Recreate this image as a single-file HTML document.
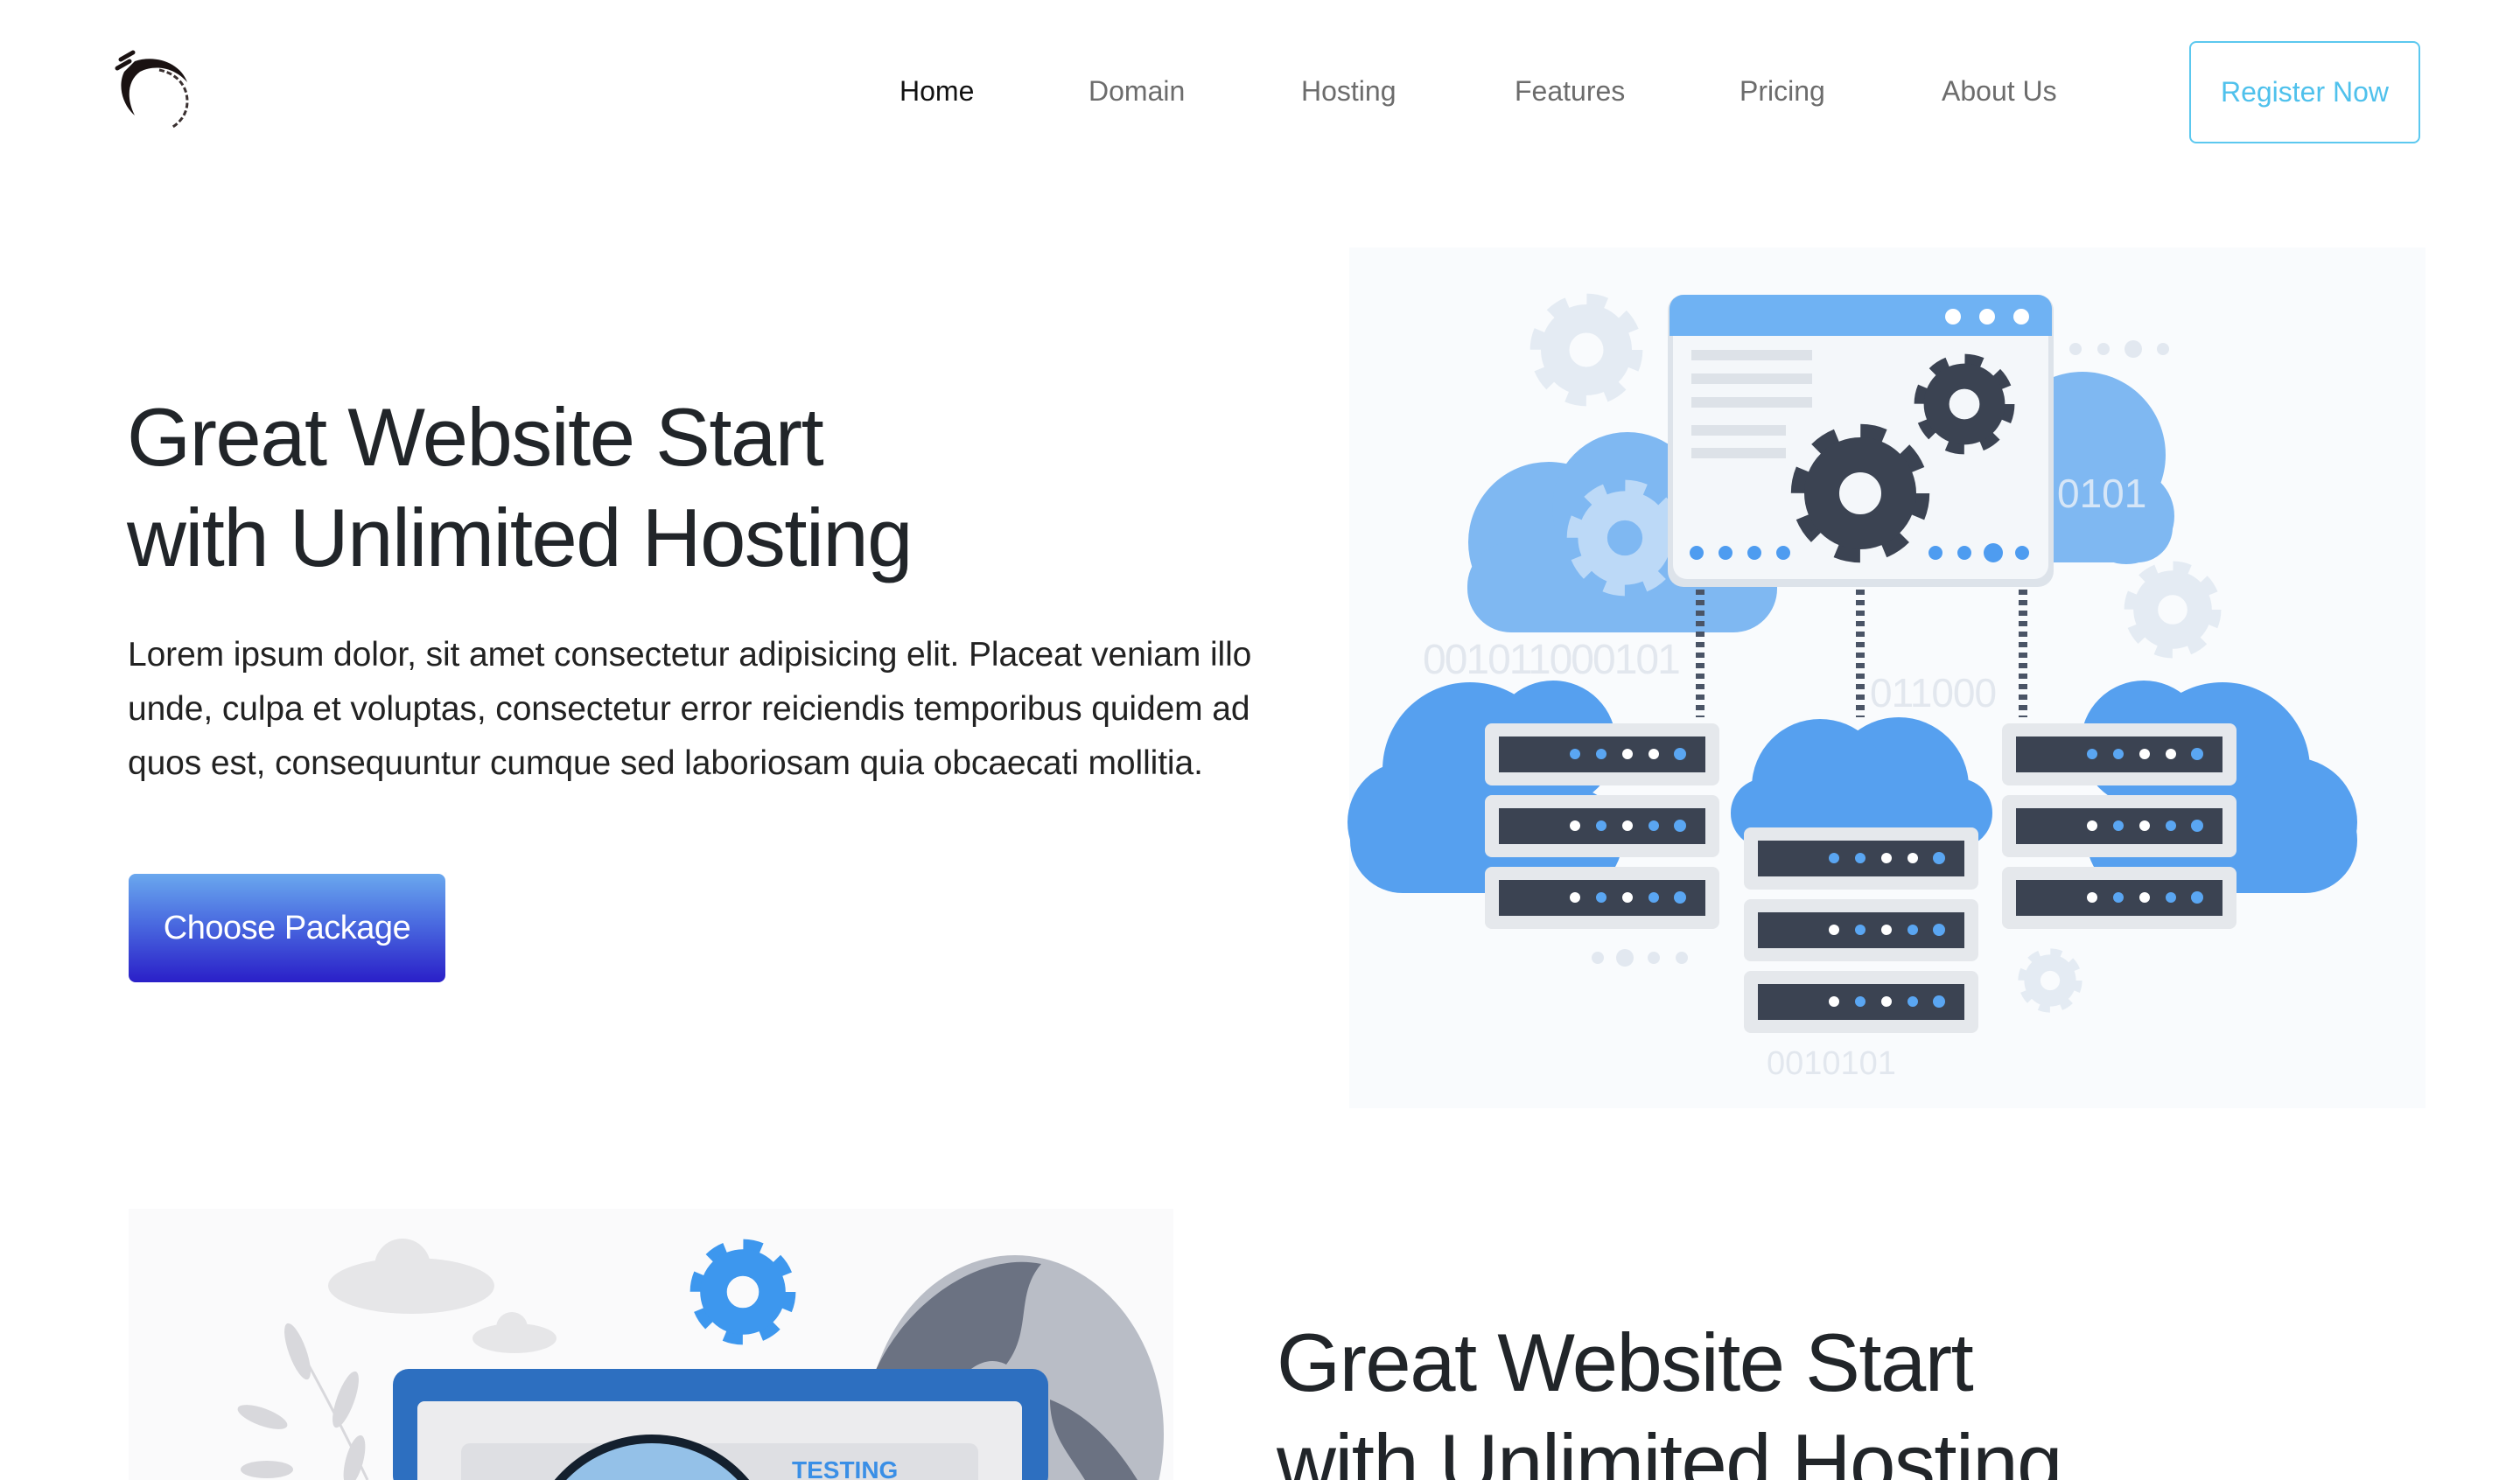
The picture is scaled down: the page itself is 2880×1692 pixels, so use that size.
<!DOCTYPE html>
<html style="overflow:hidden;width:2880px;height:1692px"><head><meta charset="utf-8"><style>
*{margin:0;padding:0;box-sizing:border-box}
body{width:2880px;height:1692px;overflow:hidden;background:#fff;font-family:"Liberation Sans",sans-serif;color:#212529}
#w{position:relative;width:2880px;height:1692px;overflow:hidden}
.a{position:absolute;white-space:nowrap}
.nav{font-size:32px;color:#6c6c6c;top:86px}
h1{font-weight:400;font-size:94px;letter-spacing:-1.5px;line-height:115px;color:#212529}
</style></head><body><div id="w">
<svg class="a" style="left:118px;top:50px" width="110" height="110" viewBox="0 0 110 110">
<path d="M20 18 L34 10 M16 28 L30 20" stroke="#1a1212" stroke-width="5" stroke-linecap="round"/>
<path d="M36 20 C60 12 88 22 96 44 C80 26 58 24 42 32 C28 42 26 62 36 82 C22 70 16 48 24 32 Z" fill="#1a1212"/>
<path d="M64 30 C84 34 96 48 96 66 C96 80 88 90 78 96" stroke="#3a3030" stroke-width="3" fill="none" stroke-dasharray="6 3"/>
</svg>
<div class="a nav" style="left:1028px;color:#111">Home</div>
<div class="a nav" style="left:1244px">Domain</div>
<div class="a nav" style="left:1487px">Hosting</div>
<div class="a nav" style="left:1731px">Features</div>
<div class="a nav" style="left:1988px">Pricing</div>
<div class="a nav" style="left:2219px">About Us</div>
<div class="a" style="left:2502px;top:47px;width:264px;height:117px;border:2px solid #5cc8ef;border-radius:8px;color:#4fc1ec;font-size:32px;line-height:113px;text-align:center">Register Now</div>

<h1 class="a" style="left:145px;top:442px">Great Website Start<br>with Unlimited Hosting</h1>
<div class="a" style="left:146px;top:718px;font-size:39px;line-height:62px;letter-spacing:-0.1px;color:#222">Lorem ipsum dolor, sit amet consectetur adipisicing elit. Placeat veniam illo<br>unde, culpa et voluptas, consectetur error reiciendis temporibus quidem ad<br>quos est, consequuntur cumque sed laboriosam quia obcaecati mollitia.</div>
<div class="a" style="left:147px;top:999px;width:362px;height:124px;border-radius:8px;background:linear-gradient(#6aa8ee,#4a6be0 45%,#2a1fc8);color:#fff;font-size:38px;line-height:124px;text-align:center;letter-spacing:-0.5px">Choose Package</div>

<svg class="a" style="left:0;top:0" width="2880" height="1692" viewBox="0 0 2880 1692">
<defs>
<symbol id="g" viewBox="-100 -100 200 200">
<circle r="84" fill="none" stroke="currentColor" stroke-width="30" stroke-dasharray="33 33"/>
<circle r="55" fill="none" stroke="currentColor" stroke-width="50"/>
</symbol>
</defs>
<rect x="1542" y="283" width="1230" height="984" fill="#f9fbfd"/>
<use href="#g" x="1748" y="335" width="130" height="130" color="#e4ebf3"/>
<use href="#g" x="2427" y="641" width="112" height="112" color="#e4ebf3"/>
<use href="#g" x="2306" y="1084" width="74" height="74" color="#e4ebf3"/>
<g fill="#e2e8f0"><circle cx="2372" cy="399" r="7"/><circle cx="2404" cy="399" r="7"/><circle cx="2438" cy="399" r="10"/><circle cx="2472" cy="399" r="7"/>
<circle cx="1826" cy="1095" r="7"/><circle cx="1857" cy="1095" r="10"/><circle cx="1890" cy="1095" r="7"/><circle cx="1922" cy="1095" r="7"/></g>
<g fill="#7fb8f2">
<circle cx="1770" cy="620" r="92"/><circle cx="1860" cy="580" r="86"/><circle cx="1950" cy="640" r="80"/><rect x="1677" y="620" width="354" height="103" rx="50"/>
<circle cx="2380" cy="520" r="95"/><circle cx="2430" cy="590" r="55"/><rect x="2300" y="560" width="183" height="83" rx="40"/>
</g>
<use href="#g" x="1790" y="548" width="134" height="134" color="#bcd9f7"/>
<text x="2351" y="580" font-size="46" fill="#d6e6f7" font-family="Liberation Sans">0101</text>
<g stroke="#4a5466" stroke-width="10" stroke-dasharray="6 6"><line x1="1943" y1="674" x2="1943" y2="820"/><line x1="2126" y1="674" x2="2126" y2="820"/><line x1="2312" y1="674" x2="2312" y2="820"/></g>
<text x="1626" y="770" font-size="48" letter-spacing="-2" fill="#e2e7ee" font-family="Liberation Sans">001011000101</text>
<text x="2137" y="808" font-size="46" letter-spacing="-1" fill="#e2e7ee" font-family="Liberation Sans">011000</text>
<text x="2019" y="1228" font-size="38" fill="#e2e7ee" font-family="Liberation Sans">0010101</text>
<rect x="1906" y="337" width="441" height="334" rx="18" fill="#dde3ea"/>
<rect x="1912" y="337" width="429" height="325" rx="16" fill="#f4f7fa"/>
<path d="M1924 337 H2329 a16 16 0 0 1 16 16 V384 H1908 V353 a16 16 0 0 1 16 -16Z" fill="#6fb2f3"/>
<g fill="#fff"><circle cx="2232" cy="362" r="9"/><circle cx="2271" cy="362" r="9"/><circle cx="2310" cy="362" r="9"/></g>
<g fill="#dde2e8"><rect x="1933" y="400" width="138" height="12"/><rect x="1933" y="427" width="138" height="12"/><rect x="1933" y="454" width="138" height="12"/><rect x="1933" y="486" width="108" height="12"/><rect x="1933" y="512" width="108" height="12"/></g>
<use href="#g" x="2046" y="484" width="160" height="160" color="#3b4352"/>
<use href="#g" x="2187" y="404" width="116" height="116" color="#3b4352"/>
<g fill="#4e9cf0"><circle cx="1939" cy="632" r="8"/><circle cx="1972" cy="632" r="8"/><circle cx="2005" cy="632" r="8"/><circle cx="2038" cy="632" r="8"/><circle cx="2212" cy="632" r="8"/><circle cx="2245" cy="632" r="8"/><circle cx="2278" cy="632" r="11"/><circle cx="2311" cy="632" r="8"/></g>
<g fill="#56a0ef">
<circle cx="1680" cy="880" r="100"/><circle cx="1775" cy="850" r="72"/><circle cx="1610" cy="940" r="70"/><rect x="1543" y="900" width="311" height="121" rx="60"/>
<circle cx="2170" cy="900" r="80"/><circle cx="2080" cy="900" r="78"/><rect x="1978" y="890" width="299" height="79" rx="39"/>
<circle cx="2540" cy="880" r="100"/><circle cx="2620" cy="940" r="74"/><circle cx="2450" cy="850" r="72"/><rect x="2385" y="900" width="309" height="121" rx="60"/>
</g>
<g id="srv">
<rect x="1697" y="827" width="268" height="71" rx="8" fill="#e5e8ec"/><rect x="1713" y="842" width="236" height="41" fill="#3b4352"/>
<rect x="1697" y="909" width="268" height="71" rx="8" fill="#e5e8ec"/><rect x="1713" y="924" width="236" height="41" fill="#3b4352"/>
<rect x="1697" y="991" width="268" height="71" rx="8" fill="#e5e8ec"/><rect x="1713" y="1006" width="236" height="41" fill="#3b4352"/>
<g fill="#5aa6f2"><circle cx="1800" cy="862" r="6"/><circle cx="1830" cy="862" r="6"/><circle cx="1920" cy="862" r="7"/><circle cx="1830" cy="944" r="6"/><circle cx="1890" cy="944" r="6"/><circle cx="1920" cy="944" r="7"/><circle cx="1830" cy="1026" r="6"/><circle cx="1890" cy="1026" r="6"/><circle cx="1920" cy="1026" r="7"/></g>
<g fill="#fff"><circle cx="1860" cy="862" r="6"/><circle cx="1890" cy="862" r="6"/><circle cx="1800" cy="944" r="6"/><circle cx="1860" cy="944" r="6"/><circle cx="1800" cy="1026" r="6"/><circle cx="1860" cy="1026" r="6"/></g>
</g>
<use href="#srv" x="296" y="119"/>
<use href="#srv" x="591" y="0"/>

<rect x="147" y="1382" width="1194" height="310" fill="#fafafb"/>
<g fill="#e6e6e8"><ellipse cx="470" cy="1470" rx="95" ry="32"/><circle cx="460" cy="1448" r="32"/><ellipse cx="588" cy="1530" rx="48" ry="17"/><circle cx="585" cy="1518" r="18"/></g>
<g fill="#d8d8dc"><ellipse cx="340" cy="1545" rx="10" ry="34" transform="rotate(-20 340 1545)"/><ellipse cx="395" cy="1600" rx="10" ry="34" transform="rotate(20 395 1600)"/><ellipse cx="300" cy="1620" rx="30" ry="10" transform="rotate(20 300 1620)"/><ellipse cx="405" cy="1670" rx="10" ry="30" transform="rotate(15 405 1670)"/><ellipse cx="305" cy="1680" rx="30" ry="10"/></g>
<path d="M330 1520 C370 1590 400 1650 420 1692" stroke="#d8d8dc" stroke-width="3" fill="none"/>
<ellipse cx="1160" cy="1640" rx="170" ry="205" fill="#b9bdc6"/>
<path d="M995 1580 C1030 1490 1120 1430 1190 1445 C1160 1480 1180 1520 1150 1560 C1110 1540 1080 1600 1050 1640 C1030 1610 1010 1600 995 1580Z M1200 1600 C1250 1620 1280 1660 1300 1692 L1240 1692 C1220 1660 1200 1640 1200 1600Z" fill="#6b7282"/>
<use href="#g" x="788" y="1416" width="122" height="122" color="#3d97ee"/>
<rect x="449" y="1565" width="749" height="140" rx="18" fill="#2d6fc0"/>
<rect x="477" y="1602" width="691" height="100" rx="8" fill="#ececee"/>
<rect x="527" y="1650" width="591" height="60" rx="10" fill="#dedfe3"/>
<circle cx="745" cy="1785" r="140" fill="#94c1e8" stroke="#14202e" stroke-width="10"/>
<text x="905" y="1690" font-size="28" font-weight="bold" fill="#3a8fe6" font-family="Liberation Sans">TESTING</text>
</svg>

<h1 class="a" style="left:1459px;top:1500px">Great Website Start<br>with Unlimited Hosting</h1>
</div></body></html>
